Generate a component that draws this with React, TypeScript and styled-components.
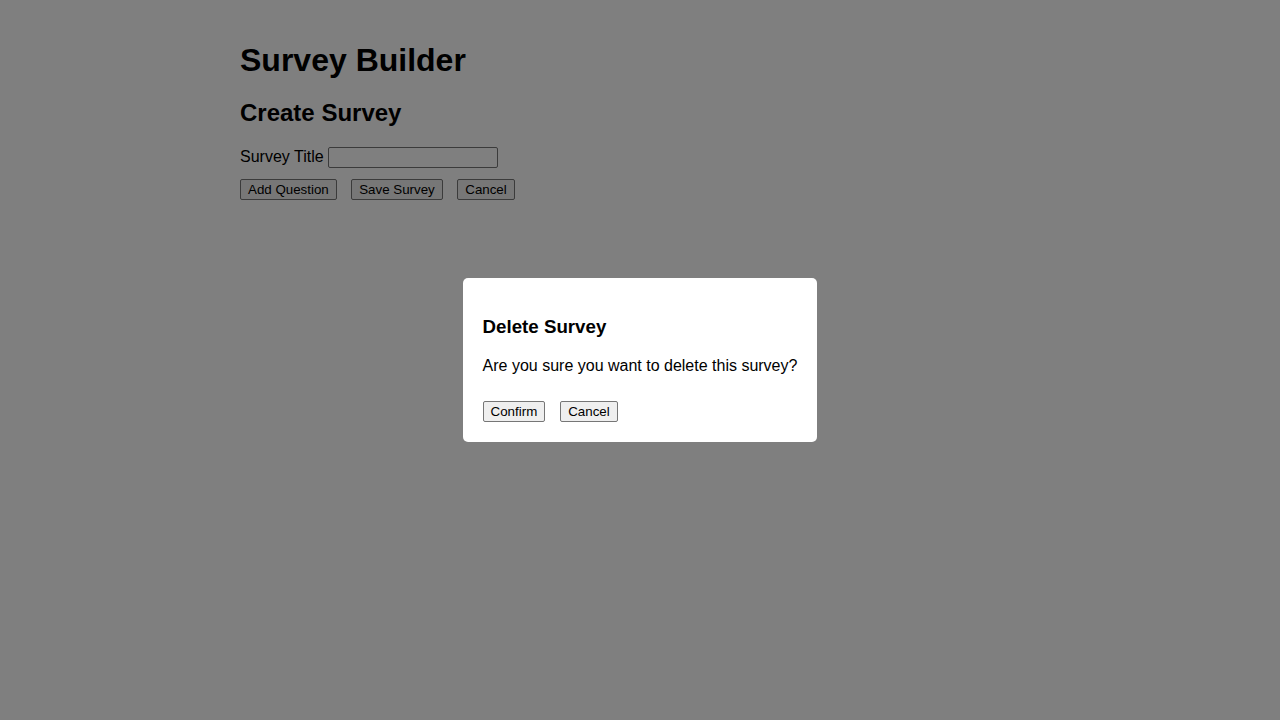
import React from "react";
import styled, { createGlobalStyle } from "styled-components";

const GlobalStyle = createGlobalStyle`
  html, body {
    margin: 0;
    padding: 0;
    background: #ffffff;
    font-family: "Liberation Sans", Arial, sans-serif;
    color: #000;
  }
`;

const Container = styled.div`
  max-width: 800px;
  margin: 0 auto;
  padding: 20px;
`;

const Title = styled.h1`
  font-size: 32px;
  font-weight: bold;
  margin: 22.4px 0 0;
`;

const SubTitle = styled.h2`
  font-size: 24px;
  font-weight: bold;
  margin: 19.4px 0 20.4px;
`;

const FormRow = styled.div`
  margin-bottom: 10.6px;
  font-size: 16px;
`;

const Label = styled.label`
  font-size: 16px;
`;

const TextInput = styled.input`
  width: 170px;
  height: 21px;
  box-sizing: border-box;
  padding: 1px 2px;
  border: 1px solid #767676;
  border-radius: 2px;
  font: 13.33px "Liberation Sans", Arial, sans-serif;
  background: #fff;
`;

const Button = styled.button`
  font: 13.33px "Liberation Sans", Arial, sans-serif;
  height: 21px;
  padding: 1px 7px;
  margin-right: 10px;
  background: #efefef;
  color: #000;
  border: 1px solid #767676;
  border-radius: 2px;
  cursor: pointer;
`;

const Overlay = styled.div`
  position: fixed;
  inset: 0;
  background: rgba(0, 0, 0, 0.5);
  display: flex;
  align-items: center;
  justify-content: center;
`;

const Modal = styled.div`
  background: #fff;
  padding: 20px;
  border-radius: 5px;
`;

const ModalTitle = styled.h3`
  font-size: 18.72px;
  font-weight: bold;
  margin: 17.72px 0 19.72px;
`;

const ModalText = styled.p`
  font-size: 16px;
  margin: 1em 0;
`;

const ModalActions = styled.div`
  margin-top: 26px;
  display: flex;
  gap: 5px;
`;

export default function App() {
  return (
    <>
      <GlobalStyle />
      <Container>
        <Title>Survey Builder</Title>
        <SubTitle>Create Survey</SubTitle>
        <FormRow>
          <Label htmlFor="survey-title">Survey Title</Label>{" "}
          <TextInput id="survey-title" type="text" />
        </FormRow>
        <div>
          <Button>Add Question</Button>{" "}
          <Button>Save Survey</Button>{" "}
          <Button>Cancel</Button>
        </div>
      </Container>
      <Overlay>
        <Modal>
          <ModalTitle>Delete Survey</ModalTitle>
          <ModalText>Are you sure you want to delete this survey?</ModalText>
          <ModalActions>
            <Button>Confirm</Button>
            <Button>Cancel</Button>
          </ModalActions>
        </Modal>
      </Overlay>
    </>
  );
}
